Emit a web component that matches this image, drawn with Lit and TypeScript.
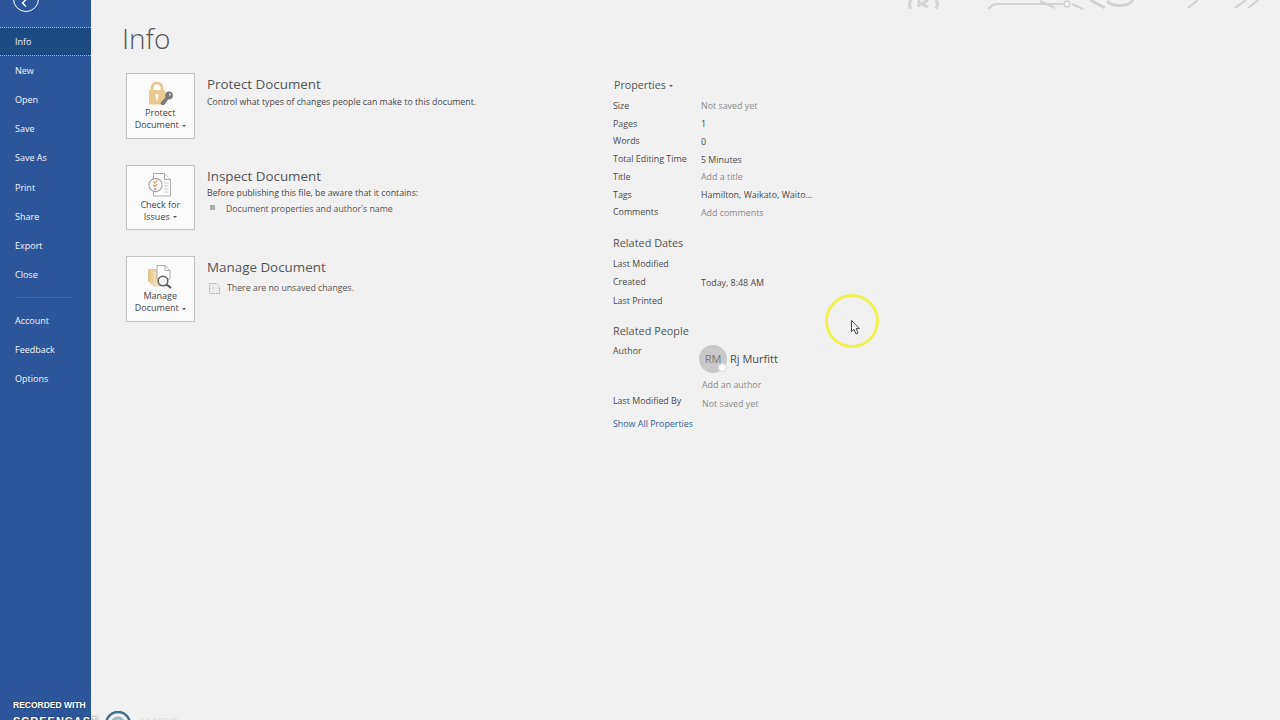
import { LitElement, html, css, svg } from "lit";
import { customElement } from "lit/decorators.js";

const NAV_TOP = ["Info", "New", "Open", "Save", "Save As", "Print", "Share", "Export", "Close"];
const NAV_BOTTOM = ["Account", "Feedback", "Options"];
const PROPS: [string, string, string][] = [
  ["Size", "Not saved yet", "muted"],
  ["Pages", "1", ""],
  ["Words", "0", ""],
  ["Total Editing Time", "5 Minutes", ""],
  ["Title", "Add a title", "muted"],
  ["Tags", "Hamilton, Waikato, Waito...", ""],
  ["Comments", "Add comments", "muted"],
];

const lockIcon = svg`<svg width="30" height="26" viewBox="0 0 30 26">
  <path d="M7 11V8a5 5 0 0 1 10 0v3" fill="none" stroke="#e6c388" stroke-width="2.6"/>
  <rect x="4" y="10" width="16" height="14.5" rx="1" fill="#ecc98f"/>
  <circle cx="12" cy="15.5" r="1.7" fill="#fff"/><rect x="11.3" y="15.5" width="1.4" height="5" fill="#fff"/>
  <path d="M16.5 25l-1-2 6-7 2.5 2.5-5 6.5z" fill="#7c7c7c"/>
  <circle cx="24" cy="15.5" r="3.9" fill="#7c7c7c"/><circle cx="25" cy="14.5" r="1" fill="#e8e8e8"/>
</svg>`;

const inspectIcon = svg`<svg width="30" height="26" viewBox="0 0 30 26">
  <path d="M8.5 1.5h11l6 6v16.5h-17z" fill="#fff" stroke="#ababab"/>
  <path d="M19.5 1.5v6h6" fill="#f4f4f4" stroke="#ababab"/>
  <path d="M19 11h4.5M19 14h4.5M19 17h4.5M19 20h4.5" stroke="#c4c4c4"/>
  <circle cx="10.5" cy="13" r="6.6" fill="#fbfbfb" stroke="#a0a0a0" stroke-width="1.1"/>
  <path d="M8.2 9.3l1.6 1.6 2.4-2.4M8.2 12.8l1.6 1.6 2.4-2.4" fill="none" stroke="#d99c58" stroke-width="1.1"/>
  <circle cx="10.2" cy="17" r="1" fill="#c8736a"/>
</svg>`;

const manageIcon = svg`<svg width="30" height="26" viewBox="0 0 30 26">
  <rect x="3" y="6" width="9" height="13" fill="#e6c88f"/>
  <rect x="5.5" y="7" width="9" height="14" fill="#edd3a3" stroke="#e2c48e" stroke-width=".5"/>
  <rect x="8" y="8" width="9" height="15" fill="#f2dcb4" stroke="#e2c48e" stroke-width=".5"/>
  <path d="M12 2.5h8l5 5V16H12z" fill="#fff" stroke="#ababab"/>
  <path d="M20 2.5v5h5" fill="none" stroke="#ababab"/>
  <circle cx="18" cy="18" r="4.8" fill="#f4f4f4" stroke="#616161" stroke-width="1.5"/>
  <path d="M21.5 21.5l4.5 3.5" stroke="#555" stroke-width="2.2"/>
</svg>`;

const smallDocIcon = svg`<svg width="13" height="13" viewBox="0 0 13 13">
  <path d="M1.5 1.5h7l3 3v7h-10z" fill="none" stroke="#a5a5a5" stroke-dasharray="1.5 1"/>
  <path d="M5 1.5v10M1.5 6h10" stroke="#c4c4c4" stroke-dasharray="1 1"/>
</svg>`;

@customElement("app-root")
export class AppRoot extends LitElement {
  static styles = css`
    :host {
      display: block;
      width: 1280px;
      height: 720px;
      position: relative;
      overflow: hidden;
      background: #f1f1f1;
      color: #444;
      font-family: "Open Sans", "Noto Sans", "Liberation Sans", sans-serif;
    }
    .app { display: flex; height: 720px; }
    .side {
      width: 91px;
      flex: none;
      background: #2b579a;
      color: #fff;
      display: flex;
      flex-direction: column;
      font-size: 9px;
    }
    .back {
      width: 26px;
      height: 26px;
      margin: -14.5px 0 15.5px 13px;
      box-sizing: border-box;
      border: 1.5px solid #fff;
      border-radius: 50%;
      display: flex;
      align-items: flex-end;
      justify-content: center;
      padding-bottom: 3px;
      flex: none;
    }
    .item { height: 29.1px; display: flex; align-items: center; padding-left: 15px; flex: none; color: #f2f5fa; }
    .item.on {
      background: #1c4a83;
      border-top: 1px dotted #a9bcd6;
      border-bottom: 1px dotted #a9bcd6;
      box-sizing: border-box;
    }
    .rule { height: 1px; background: #3f69a5; margin: 8px 19px 8px 15px; width: 57px; flex: none; }
    .main { flex: 1; padding: 20px 0 0 31px; min-width: 0; }
    h1 { margin: 0 0 17px; font-size: 28px; line-height: 36px; font-weight: 300; color: #555; font-family: "Open Sans", sans-serif; }
    .cols { display: flex; }
    .left { width: 491px; flex: none; padding-left: 4px; box-sizing: border-box; }
    .sec { display: flex; height: 91.5px; align-items: flex-start; }
    .btn {
      width: 68.5px;
      height: 65.5px;
      margin-right: .5px;
      flex: none;
      box-sizing: border-box;
      background: #fbfbfb;
      border: 1px solid #c2c2c2;
      display: flex;
      flex-direction: column;
      align-items: center;
      padding-top: 6px;
      font-size: 9px;
      line-height: 12.2px;
      color: #444;
      text-align: center;
    }
    .btn svg { display: block; flex: none; margin-bottom: 1px; }
    .caret {
      display: inline-block;
      width: 0; height: 0;
      border-left: 2px solid transparent;
      border-right: 2px solid transparent;
      border-top: 2px solid #555;
      vertical-align: middle;
      margin-left: 3px;
    }
    .txt { padding-left: 12px; padding-top: 1px; }
    h2 { margin: 0; font-size: 13.4px; line-height: 20px; font-weight: 400; color: #555; white-space: nowrap; }
    .sub { font-size: 8.75px; line-height: 15.5px; padding-top: .7px; color: #484848; white-space: nowrap; }
    .li { display: flex; align-items: center; font-size: 8.75px; line-height: 14.5px; color: #555; padding-left: 3px; }
    .sq { width: 5px; height: 5px; background: #adadad; margin-right: 11px; flex: none; margin-top: -2px; }
    .li.note { padding-left: 1px; margin-top: 4px; }
    .li.note svg { margin-right: 6px; }
    .right { padding-top: 4px; width: 260px; }
    .right h3 { margin: 0; font-size: 10.9px; line-height: 16px; font-weight: 400; color: #555; white-space: nowrap; }
    .right h3.top { font-size: 10.7px; padding-left: 1px; margin-bottom: 4px; }
    .right h3.gap { margin-top: 14px; margin-bottom: 3px; }
    .right h3.people { margin-top: 13px; margin-bottom: 3.5px; }
    .row { display: grid; grid-template-columns: 88px 1fr; height: 17.75px; align-items: center; font-size: 8.87px; color: #4a4a4a; white-space: nowrap; }
    .row span:last-child { padding-top: 1px; }
    .muted { color: #8a8a8a; }
    .row.tall { height: 18.6px; }
    .row .lift { padding-bottom: 4px; }
    .row .low { padding-left: 1px; }
    .person { display: flex; align-items: center; margin-left: 88px; height: 28px; margin-top: -15.5px; font-size: 11px; color: #4a4a4a; }
    .avatar {
      width: 28px; height: 28px; border-radius: 50%; background: #c9c9c9; color: #777;
      font-size: 11px; display: flex; align-items: center; justify-content: center;
      margin-left: -2px; margin-right: 3px; position: relative; padding-bottom: 1px; box-sizing: border-box; flex: none;
    }
    .presence {
      position: absolute; right: .5px; bottom: .5px; width: 9px; height: 9px; border-radius: 50%;
      background: #fff; border: 1px solid #d8d8d8; box-sizing: border-box;
    }
    .add { margin-left: 89px; font-size: 8.87px; line-height: 18px; color: #8a8a8a; margin-top: 3.5px; }
    .link { font-size: 8.87px; line-height: 18px; color: #2f6296; margin-top: 3px; }
    .ring {
      position: absolute; left: 825px; top: 294px; width: 54px; height: 54px; box-sizing: border-box;
      border-radius: 50%; border: 3px solid #f2f24e; filter: blur(.7px);
    }
    .cursor { position: absolute; left: 851px; top: 320px; }
    .wm {
      position: absolute; left: 13px; top: 699px; font-size: 8.5px; font-weight: 700; line-height: 12px;
      color: #fff; text-shadow: 0 0 2px #333; white-space: nowrap; font-family: "Liberation Sans", sans-serif;
    }
    .wm .l2 { font-size: 11px; letter-spacing: 1px; line-height: 14px; margin-top: 3px; }
    .wm-logo { position: absolute; left: 104px; top: 711px; }
    .wm-end {
      position: absolute; left: 140px; top: 715px; font-size: 11px; font-weight: 700; letter-spacing: 1px; line-height: 14px;
      color: #e2e2e2; font-family: "Liberation Sans", sans-serif;
    }
    .deco { position: absolute; left: 900px; top: 0; }
  `;

  render() {
    return html`
      <div class="app">
        <nav class="side">
          <div class="back">
            <svg width="12" height="9" viewBox="0 0 12 9"><path d="M6 0.5L2.5 4l3.5 3.5" fill="none" stroke="#fff" stroke-width="1.4"/></svg>
          </div>
          ${NAV_TOP.map((n, i) => html`<div class="item ${i === 0 ? "on" : ""}">${n}</div>`)}
          <div class="rule"></div>
          ${NAV_BOTTOM.map((n) => html`<div class="item">${n}</div>`)}
        </nav>
        <main class="main">
          <h1>Info</h1>
          <div class="cols">
            <div class="left">
              <section class="sec">
                <div class="btn">${lockIcon}<span>Protect</span><span>Document<i class="caret"></i></span></div>
                <div class="txt">
                  <h2>Protect Document</h2>
                  <div class="sub">Control what types of changes people can make to this document.</div>
                </div>
              </section>
              <section class="sec">
                <div class="btn">${inspectIcon}<span>Check for</span><span>Issues<i class="caret"></i></span></div>
                <div class="txt">
                  <h2>Inspect Document</h2>
                  <div class="sub">Before publishing this file, be aware that it contains:</div>
                  <div class="li"><i class="sq"></i>Document properties and author's name</div>
                </div>
              </section>
              <section class="sec">
                <div class="btn">${manageIcon}<span>Manage</span><span>Document<i class="caret"></i></span></div>
                <div class="txt">
                  <h2>Manage Document</h2>
                  <div class="li note">${smallDocIcon}There are no unsaved changes.</div>
                </div>
              </section>
            </div>
            <div class="right">
              <h3 class="top">Properties<i class="caret"></i></h3>
              ${PROPS.map(([k, v, c]) => html`<div class="row"><span>${k}</span><span class=${c}>${v}</span></div>`)}
              <h3 class="gap">Related Dates</h3>
              <div class="row tall"><span>Last Modified</span><span></span></div>
              <div class="row tall"><span>Created</span><span>Today, 8:48 AM</span></div>
              <div class="row tall"><span>Last Printed</span><span></span></div>
              <h3 class="people">Related People</h3>
              <div class="row"><span>Author</span><span></span></div>
              <div class="person"><div class="avatar">RM<i class="presence"></i></div>Rj Murfitt</div>
              <div class="add">Add an author</div>
              <div class="row"><span class="lift">Last Modified By</span><span class="muted low">Not saved yet</span></div>
              <div class="link">Show All Properties</div>
            </div>
          </div>
        </main>
      </div>
      <svg class="deco" width="380" height="12" viewBox="0 0 380 12" fill="none" stroke="#d2d2d2" stroke-width="2">
        <path d="M11 0c-2 3-2 6 0 9M36 0c2 3 2 6 0 9" stroke-width="3"/>
        <path d="M19 0v7M28 0l-6 4 6 3" stroke-width="3"/>
        <path d="M88 9c3-3 6-5 9-5h43l10 0h13M172 4l11 5M140 1l15 7"/>
        <circle cx="167" cy="4" r="3" fill="#f1f1f1" stroke-width="1.5"/>
        <path d="M190 0l15 8M207 1a14 8 0 0 0 26-1" stroke-width="3"/>
        <path d="M288 8l10-8M335 8l11-8M348 8l10-8"/>
      </svg>
      <div class="ring"></div>
      <svg class="cursor" width="10" height="15" viewBox="0 0 10 15"><path d="M.5.5v11l2.5-2.2 2 4.6 2-1-2-4.3h3.4z" fill="#fff" stroke="#333" stroke-width=".9"/></svg>
      <div class="wm">RECORDED WITH<div class="l2">SCREENCAST</div></div>
      <svg class="wm-logo" width="30" height="9" viewBox="0 0 30 9" fill="none">
        <circle cx="14" cy="13" r="12" stroke="#3f6f8e" stroke-width="2.5"/>
        <circle cx="14" cy="13" r="6" stroke="#9db8c8" stroke-width="3"/>
      </svg>
      <div class="wm-end">MATIC</div>
    `;
  }
}
